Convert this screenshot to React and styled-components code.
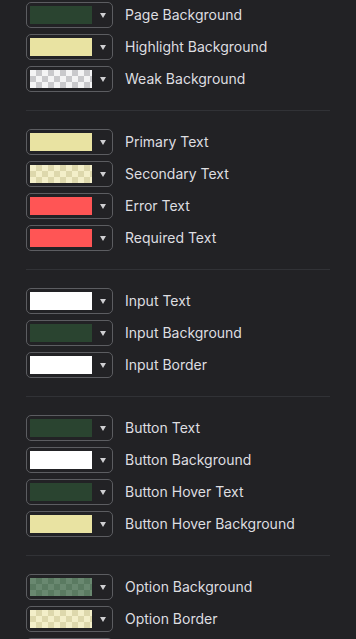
import styled, { createGlobalStyle } from "styled-components"

const GlobalStyle = createGlobalStyle`
    html, body {
        margin: 0;
        padding: 0;
        background-color: #222225;
        font-family: Inter, Roboto, "Liberation Sans", sans-serif;
        overflow: hidden;
    }
`

const swatches = {
    green: { kind: "solid", color: "#2a4430" },
    yellow: { kind: "solid", color: "#e9e3a2" },
    white: { kind: "solid", color: "#ffffff" },
    red: { kind: "solid", color: "#ff5555" },
    weak: { kind: "check", a: "#f4f4f5", b: "#c9c9cc" },
    paleYellow: { kind: "check", a: "#f3efc9", b: "#ddd8ac" },
    paleGreen: { kind: "check", a: "#698870", b: "#5a7a61" },
}

const groups = [
    [
        ["green", "Page Background"],
        ["yellow", "Highlight Background"],
        ["weak", "Weak Background"],
    ],
    [
        ["yellow", "Primary Text"],
        ["paleYellow", "Secondary Text"],
        ["red", "Error Text"],
        ["red", "Required Text"],
    ],
    [
        ["white", "Input Text"],
        ["green", "Input Background"],
        ["white", "Input Border"],
    ],
    [
        ["green", "Button Text"],
        ["white", "Button Background"],
        ["green", "Button Hover Text"],
        ["yellow", "Button Hover Background"],
    ],
    [
        ["paleGreen", "Option Background"],
        ["paleYellow", "Option Border"],
        ["yellow", "Option Text"],
    ],
]

export default function App() {
    return (
        <>
            <GlobalStyle />
            <Panel>
                {groups.map((g, i) => (
                    <Group key={i}>
                        {g.map(([sw, label]) => (
                            <Row key={label}>
                                <Picker>
                                    <Swatch $sw={swatches[sw]} />
                                    <Arrow />
                                </Picker>
                                <Label>{label}</Label>
                            </Row>
                        ))}
                    </Group>
                ))}
            </Panel>
        </>
    )
}

const Panel = styled.div`
    width: 304px;
    margin-left: 26px;
    padding-top: 2px;
    display: flex;
    flex-direction: column;
`
const Group = styled.div`
    display: flex;
    flex-direction: column;
    gap: 6px;
    padding: 18px 0;
    border-bottom: 1px solid #313236;

    &:first-child {
        padding-top: 0;
    }
`
const Row = styled.div`
    display: flex;
    align-items: center;
    height: 26px;
`
const Picker = styled.div`
    box-sizing: border-box;
    width: 87px;
    height: 26px;
    border: 1px solid #5c5d61;
    border-radius: 5px;
    display: flex;
    align-items: center;
    padding-left: 3px;
`
const Swatch = styled.div`
    width: 62px;
    height: 18px;
    background-color: ${(p) => (p.$sw.kind === "solid" ? p.$sw.color : p.$sw.a)};
    background-image: ${(p) =>
        p.$sw.kind === "check"
            ? `linear-gradient(45deg, ${p.$sw.b} 25%, transparent 25%, transparent 75%, ${p.$sw.b} 75%),
               linear-gradient(45deg, ${p.$sw.b} 25%, transparent 25%, transparent 75%, ${p.$sw.b} 75%)`
            : "none"};
    background-size: 12px 12px;
    background-position: 0 0, 6px 6px;
`
const Arrow = styled.div`
    width: 0;
    height: 0;
    margin-left: 8px;
    border-left: 3px solid transparent;
    border-right: 3px solid transparent;
    border-top: 5px solid #cfcfd2;
`
const Label = styled.span`
    margin-left: 12px;
    padding-bottom: 2px;
    font-size: 14px;
    color: #dedee0;
    white-space: nowrap;
`
